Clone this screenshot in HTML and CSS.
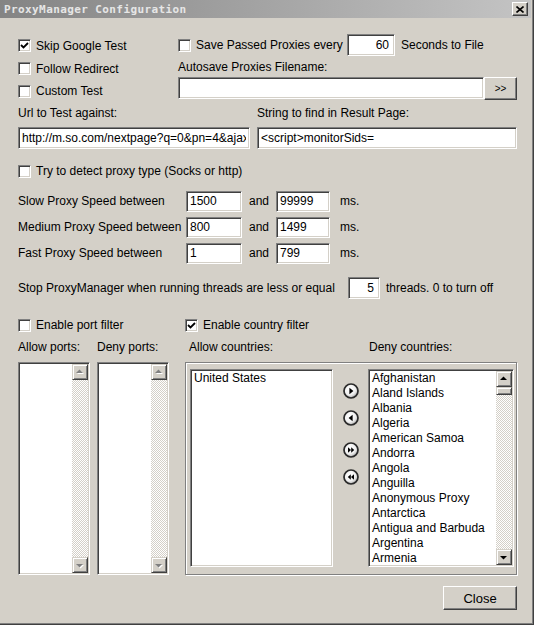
FILE: index.html
```html
<!DOCTYPE html>
<html lang="en">
<head>
    <meta charset="UTF-8">
    <meta name="viewport" content="width=device-width, initial-scale=1.0">
    <title>ProxyManager Configuration</title>
    <link rel="stylesheet" href="styles.css">
</head>
<body>

    <div class="window">
        <!-- Caption -->
        <div class="titlebar">
            <span class="title">ProxyManager Configuration</span>
            <span class="title-close">
                <svg width="8" height="7" viewBox="0 0 8 7"><path d="M0.5 0.5 L7.5 6.5 M7.5 0.5 L0.5 6.5" stroke="#000" stroke-width="1.6"/></svg>
            </span>
        </div>

        <div class="content">
            <!-- Test options and autosave -->
            <div class="top">
                <div class="top-left">
                    <label class="check row-23"><span class="box"><svg width="9" height="9" viewBox="0 0 9 9"><path d="M1 4 L3.5 6.5 L8 2" fill="none" stroke="#000" stroke-width="1.8"/></svg></span>Skip Google Test</label>
                    <label class="check row-23"><span class="box"></span>Follow Redirect</label>
                    <label class="check row-22"><span class="box"></span>Custom Test</label>
                </div>
                <div class="top-right">
                    <div class="line line-22">
                        <label class="check save-label"><span class="box"></span>Save Passed Proxies every</label>
                        <input class="field num seconds" type="text" value="60">
                        <span class="after-seconds">Seconds to File</span>
                    </div>
                    <div class="line line-21">Autosave Proxies Filename:</div>
                    <div class="line line-22">
                        <input class="field filename" type="text" value="">
                        <button class="btn browse">&gt;&gt;</button>
                    </div>
                </div>
            </div>

            <div class="line line-22">
                <span class="url-caption">Url to Test against:</span>
                <span>String to find in Result Page:</span>
            </div>
            <div class="line line-22 url-row">
                <input class="field url" type="text" value="http://m.so.com/nextpage?q=0&amp;pn=4&amp;ajax=1">
                <input class="field find" type="text" value="<script>monitorSids=">
            </div>

            <label class="check line-22 detect"><span class="box"></span>Try to detect proxy type (Socks or http)</label>

            <!-- Speed ranges -->
            <div class="speeds">
                <div class="speed">
                    <span class="speed-name">Slow Proxy Speed between</span>
                    <input class="field from" type="text" value="1500">
                    <span class="and">and</span>
                    <input class="field to" type="text" value="99999">
                    <span class="ms">ms.</span>
                </div>
                <div class="speed">
                    <span class="speed-name">Medium Proxy Speed between</span>
                    <input class="field from" type="text" value="800">
                    <span class="and">and</span>
                    <input class="field to" type="text" value="1499">
                    <span class="ms">ms.</span>
                </div>
                <div class="speed">
                    <span class="speed-name">Fast Proxy Speed between</span>
                    <input class="field from" type="text" value="1">
                    <span class="and">and</span>
                    <input class="field to" type="text" value="799">
                    <span class="ms">ms.</span>
                </div>
            </div>

            <div class="line line-22 stop">
                <span class="stop-text">Stop ProxyManager when running threads are less or equal</span>
                <input class="field num threads" type="text" value="5">
                <span class="threads-text">threads. 0 to turn off</span>
            </div>

            <!-- Port and country filters -->
            <div class="line line-22 filters">
                <label class="check port-filter"><span class="box"></span>Enable port filter</label>
                <label class="check"><span class="box"><svg width="9" height="9" viewBox="0 0 9 9"><path d="M1 4 L3.5 6.5 L8 2" fill="none" stroke="#000" stroke-width="1.8"/></svg></span>Enable country filter</label>
            </div>
            <div class="line line-22">
                <span class="cap-allow-ports">Allow ports:</span>
                <span class="cap-deny-ports">Deny ports:</span>
                <span class="cap-allow-countries">Allow countries:</span>
                <span>Deny countries:</span>
            </div>

            <div class="lists">
                <div class="list ports">
                    <div class="list-body"></div>
                    <div class="vscroll disabled">
                        <span class="sb-btn"><svg width="16" height="16" viewBox="0 0 16 16"><polygon points="5,10 12,10 8.5,6.5" fill="#fff"/><polygon points="4,9 11,9 7.5,5.5" fill="#808080"/></svg></span>
                        <span class="sb-track"></span>
                        <span class="sb-btn"><svg width="16" height="16" viewBox="0 0 16 16"><polygon points="5,8 12,8 8.5,11.5" fill="#fff"/><polygon points="4,7 11,7 7.5,10.5" fill="#808080"/></svg></span>
                    </div>
                </div>
                <div class="list ports">
                    <div class="list-body"></div>
                    <div class="vscroll disabled">
                        <span class="sb-btn"><svg width="16" height="16" viewBox="0 0 16 16"><polygon points="5,10 12,10 8.5,6.5" fill="#fff"/><polygon points="4,9 11,9 7.5,5.5" fill="#808080"/></svg></span>
                        <span class="sb-track"></span>
                        <span class="sb-btn"><svg width="16" height="16" viewBox="0 0 16 16"><polygon points="5,8 12,8 8.5,11.5" fill="#fff"/><polygon points="4,7 11,7 7.5,10.5" fill="#808080"/></svg></span>
                    </div>
                </div>

                <div class="countries">
                    <div class="list allow">
                        <ul class="list-body items" id="allow-list"></ul>
                    </div>
                    <div class="movers">
                        <span class="mover"><svg width="16" height="16" viewBox="0 0 16 16"><circle cx="8" cy="8" r="7" fill="url(#knob)" stroke="#2a2a2a" stroke-width="1.7"/><polygon points="6.4,4.8 10.4,8 6.4,11.2" fill="#000"/></svg></span>
                        <span class="mover m2"><svg width="16" height="16" viewBox="0 0 16 16"><circle cx="8" cy="8" r="7" fill="url(#knob)" stroke="#2a2a2a" stroke-width="1.7"/><polygon points="9.6,4.8 5.6,8 9.6,11.2" fill="#000"/></svg></span>
                        <span class="mover m3"><svg width="16" height="16" viewBox="0 0 16 16"><circle cx="8" cy="8" r="7" fill="url(#knob)" stroke="#2a2a2a" stroke-width="1.7"/><polygon points="5,5.2 8,8 5,10.8" fill="#000"/><polygon points="8.2,5.2 11.2,8 8.2,10.8" fill="#000"/></svg></span>
                        <span class="mover m4"><svg width="16" height="16" viewBox="0 0 16 16"><circle cx="8" cy="8" r="7" fill="url(#knob)" stroke="#2a2a2a" stroke-width="1.7"/><polygon points="7.8,5.2 4.8,8 7.8,10.8" fill="#000"/><polygon points="11,5.2 8,8 11,10.8" fill="#000"/></svg></span>
                    </div>
                    <div class="list deny">
                        <ul class="list-body items" id="deny-list"></ul>
                        <div class="vscroll">
                            <span class="sb-btn"><svg width="16" height="16" viewBox="0 0 16 16"><polygon points="4,9 11,9 7.5,5.5" fill="#000"/></svg></span>
                            <span class="sb-track"><span class="sb-thumb"></span></span>
                            <span class="sb-btn"><svg width="16" height="16" viewBox="0 0 16 16"><polygon points="4,7 11,7 7.5,10.5" fill="#000"/></svg></span>
                        </div>
                    </div>
                </div>
            </div>

            <div class="footer">
                <button class="btn close">Close</button>
            </div>
        </div>
    </div>

    <!-- shared gradient for the round mover buttons -->
    <svg width="0" height="0" class="defs">
        <defs>
            <radialGradient id="knob" cx="40%" cy="35%" r="70%">
                <stop offset="0" stop-color="#ffffff"/>
                <stop offset="0.6" stop-color="#f0f0f0"/>
                <stop offset="1" stop-color="#a8a8a8"/>
            </radialGradient>
        </defs>
    </svg>

    <script>
        const allowCountries = ["United States"];
        // only the rows that fit in the visible part of the listbox
        const denyCountries = [
            "Afghanistan", "Aland Islands", "Albania", "Algeria", "American Samoa",
            "Andorra", "Angola", "Anguilla", "Anonymous Proxy", "Antarctica",
            "Antigua and Barbuda", "Argentina", "Armenia"
        ];

        // Fill a listbox with one row per country
        function fillList(id, names) {
            const list = document.getElementById(id);
            names.forEach(name => {
                const li = document.createElement("li");
                li.textContent = name;
                list.appendChild(li);
            });
        }

        fillList("allow-list", allowCountries);
        fillList("deny-list", denyCountries);
    </script>

</body>
</html>
```

FILE: styles.css
```css
* {
    box-sizing: border-box;
}

body {
    margin: 0;
    background-color: #d4d0c8;
    font-family: "Liberation Sans", Arial, sans-serif;
    font-size: 12px;
    color: #000;
}

.window {
    width: 534px;
    height: 625px;
    padding: 0 2px 2px 0;
    background: #d4d0c8;
    border-right: 1px solid #404040;
    border-bottom: 1px solid #404040;
    box-shadow: inset -1px -1px #808080;
    overflow: hidden;
}

.titlebar {
    height: 18px;
    display: flex;
    align-items: center;
    justify-content: space-between;
    padding: 0 3px 0 4px;
    background: linear-gradient(to right, #848484, #c4c4c4);
}

.title {
    font-family: "DejaVu Sans Mono", "Liberation Mono", monospace;
    font-weight: bold;
    font-size: 11px;
    letter-spacing: 0.4px;
    color: #e6e6e6;
}

.title-close {
    width: 16px;
    height: 14px;
    display: flex;
    align-items: center;
    justify-content: center;
    background: #d4d0c8;
    border: 1px solid;
    border-color: #fff #404040 #404040 #fff;
    box-shadow: inset -1px -1px #808080;
}

.content {
    padding: 0 14px 0 18px;
}

/* generic rows */
.line {
    display: flex;
    align-items: center;
}

.line-22 {
    height: 22px;
}

.line-21 {
    height: 21px;
}

.row-23 {
    height: 23px;
}

.row-22 {
    height: 22px;
}

/* checkbox */
.check {
    display: flex;
    align-items: center;
    gap: 5px;
}

.box {
    width: 13px;
    height: 13px;
    flex: none;
    display: flex;
    align-items: center;
    justify-content: center;
    background: #fff;
    border: 1px solid;
    border-color: #808080 #fff #fff #808080;
    box-shadow: inset 1px 1px #404040, inset -1px -1px #d4d0c8;
}

/* sunken edit field */
.field {
    height: 22px;
    margin: 0;
    padding: 0 3px;
    font: inherit;
    color: #000;
    background: #fff;
    border: 1px solid;
    border-color: #808080 #fff #fff #808080;
    box-shadow: inset 1px 1px #404040, inset -1px -1px #d4d0c8;
    outline: none;
}

.field.num {
    text-align: right;
    padding-right: 5px;
}

/* raised push button */
.btn {
    margin: 0;
    padding: 0;
    font: inherit;
    color: #000;
    background: #d4d0c8;
    border: 1px solid;
    border-color: #fff #404040 #404040 #fff;
    box-shadow: inset -1px -1px #808080, inset 1px 1px #d4d0c8;
}

.top {
    display: flex;
    margin-top: 16px;
}

.top-left {
    width: 160px;
}

.top-right {
    flex: 1;
}

.save-label {
    width: 169px;
}

.seconds {
    width: 48px;
}

.after-seconds {
    margin-left: 6px;
}

.filename {
    width: 306px;
}

.browse {
    width: 33px;
    height: 23px;
    font-size: 10px;
}

.url-caption {
    width: 239px;
}

.url-row {
    margin-top: 3px;
}

.url {
    width: 232px;
}

.find {
    width: 260px;
    margin-left: 7px;
}

.detect {
    margin-top: 11px;
}

.speeds {
    margin-top: 6px;
}

.speed {
    height: 26px;
    display: flex;
    align-items: center;
}

.speed .field {
    height: 21px;
}

.speed-name {
    width: 168px;
}

.from {
    width: 56px;
}

.and {
    width: 34px;
    padding-left: 7px;
}

.to {
    width: 54px;
}

.ms {
    margin-left: 10px;
}

.stop {
    margin-top: 11px;
}

.stop-text {
    width: 330px;
}

.threads {
    width: 32px;
}

.threads-text {
    margin-left: 6px;
}

.filters {
    margin-top: 15px;
}

.port-filter {
    width: 167px;
}

.cap-allow-ports {
    width: 79px;
}

.cap-deny-ports {
    width: 92px;
}

.cap-allow-countries {
    width: 180px;
}

/* listboxes */
.lists {
    display: flex;
    margin-top: 4px;
    height: 213px;
}

.list {
    display: flex;
    background: #fff;
    border: 1px solid;
    border-color: #808080 #fff #fff #808080;
    box-shadow: inset 1px 1px #404040, inset -1px -1px #d4d0c8;
    padding: 1px;
    overflow: hidden;
}

.list-body {
    flex: 1;
    min-width: 0;
}

.ports {
    width: 72px;
    height: 213px;
}

.ports + .ports {
    margin-left: 7px;
}

.items {
    list-style: none;
    margin: 0;
    padding: 0 0 0 2px;
    overflow: hidden;
}

.items li {
    height: 15px;
    line-height: 15px;
    white-space: nowrap;
}

/* vertical scrollbar */
.vscroll {
    width: 16px;
    flex: none;
    display: flex;
    flex-direction: column;
}

.sb-btn {
    width: 16px;
    height: 16px;
    flex: none;
    display: block;
    background: #d4d0c8;
    border: 1px solid;
    border-color: #d4d0c8 #404040 #404040 #d4d0c8;
    box-shadow: inset 1px 1px #fff, inset -1px -1px #808080;
}

.sb-btn svg {
    display: block;
    margin: -1px;
}

.sb-track {
    flex: 1;
    background: repeating-conic-gradient(#d4d0c8 0 25%, #fff 0 50%) 0 0 / 2px 2px;
}

.sb-thumb {
    display: block;
    height: 8px;
    background: #d4d0c8;
    border: 1px solid;
    border-color: #d4d0c8 #404040 #404040 #d4d0c8;
    box-shadow: inset 1px 1px #fff, inset -1px -1px #808080;
}

/* etched country group */
.countries {
    width: 332px;
    height: 213px;
    margin-left: 16px;
    display: flex;
    align-items: flex-start;
    padding: 6px 2px 0 4px;
    border: 1px solid #808080;
    box-shadow: inset 1px 1px #fff, 1px 1px #fff;
}

.allow {
    width: 143px;
    height: 198px;
}

.deny {
    width: 146px;
    height: 198px;
}

/* round move buttons between the two country lists */
.movers {
    width: 35px;
    flex: none;
    display: flex;
    flex-direction: column;
    align-items: center;
    padding-top: 14px;
}

.mover {
    width: 16px;
    height: 16px;
    display: block;
}

.mover svg {
    display: block;
}

.m2 {
    margin-top: 11px;
}

.m3 {
    margin-top: 16px;
}

.m4 {
    margin-top: 11px;
}

.footer {
    display: flex;
    justify-content: flex-end;
    margin-top: 11px;
}

.close {
    width: 74px;
    height: 24px;
    font-size: 13px;
}

.defs {
    position: absolute;
}
```
